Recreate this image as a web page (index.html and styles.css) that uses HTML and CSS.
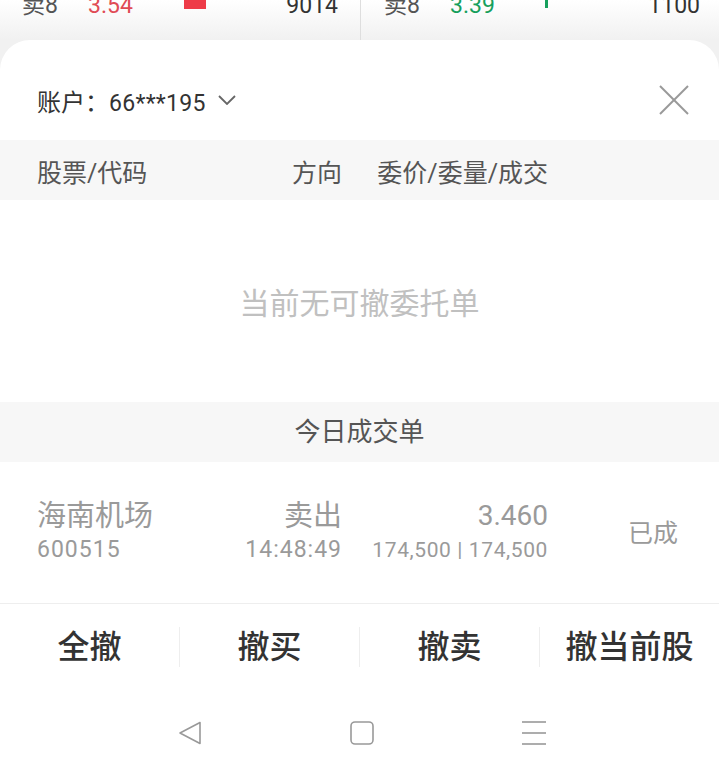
FILE: index.html
```html
<!DOCTYPE html>
<html lang="zh-CN">
<head>
  <meta charset="UTF-8" />
  <title>撤单</title>
  <meta name="viewport" content="width=device-width, initial-scale=1.0" />
  <link rel="stylesheet" href="styles.css">
</head>
<body>
  <div class="quote-row">
    <div class="quote-half left">
      <span class="q-label">卖8</span>
      <span class="q-price up">3.54</span>
      <span class="q-bar red"></span>
      <span class="q-vol">9014</span>
    </div>
    <div class="quote-half right">
      <span class="q-label">卖8</span>
      <span class="q-price down">3.39</span>
      <span class="q-bar green"></span>
      <span class="q-vol">1100</span>
    </div>
  </div>

  <div class="sheet">
    <div class="account-row">
      <span class="account">账户：<span class="num">66***195</span></span>
      <svg class="chevron" width="18" height="10" viewBox="0 0 18 10">
        <polyline points="1,1 9,9 17,1" fill="none" stroke="#666" stroke-width="1.8" />
      </svg>
      <svg class="close" width="30" height="30" viewBox="0 0 30 30">
        <line x1="1" y1="1" x2="29" y2="29" stroke="#999" stroke-width="2" />
        <line x1="29" y1="1" x2="1" y2="29" stroke="#999" stroke-width="2" />
      </svg>
    </div>

    <div class="table-head cols">
      <div>股票/代码</div>
      <div class="r">方向</div>
      <div class="r">委价/委量/成交</div>
      <div></div>
    </div>

    <div class="empty">当前无可撤委托单</div>

    <div class="section-title">今日成交单</div>

    <div class="trade cols">
      <div class="cell">
        <div class="big">海南机场</div>
        <div class="small num">600515</div>
      </div>
      <div class="cell r">
        <div class="big">卖出</div>
        <div class="small num">14:48:49</div>
      </div>
      <div class="cell r">
        <div class="big num price">3.460</div>
        <div class="small num qty">174,500 | 174,500</div>
      </div>
      <div class="status">已成</div>
    </div>

    <div class="actions">
      <button class="act">全撤</button>
      <button class="act">撤买</button>
      <button class="act">撤卖</button>
      <button class="act">撤当前股</button>
    </div>

    <div class="navbar">
      <svg width="24" height="24" viewBox="0 0 24 24">
        <polygon points="22,1.5 2,12 22,22.5" fill="none" stroke="#999" stroke-width="1.6" stroke-linejoin="round" />
      </svg>
      <svg width="24" height="24" viewBox="0 0 24 24">
        <rect x="1" y="1" width="22" height="22" rx="4" fill="none" stroke="#999" stroke-width="1.6" />
      </svg>
      <svg width="24" height="24" viewBox="0 0 24 24">
        <line x1="0" y1="1" x2="24" y2="1" stroke="#999" stroke-width="1.6" />
        <line x1="0" y1="12" x2="24" y2="12" stroke="#999" stroke-width="1.6" />
        <line x1="0" y1="23" x2="24" y2="23" stroke="#999" stroke-width="1.6" />
      </svg>
    </div>
  </div>
</body>
</html>
```

FILE: styles.css
```css
body {
  margin: 0;
  font-family: Roboto, "Noto Sans CJK SC", sans-serif;
  background: linear-gradient(#ffffff, #f1f1f1 40px);
  width: 719px;
  height: 777px;
  overflow: hidden;
}

/* market depth strip behind the sheet */
.quote-row {
  display: flex;
  height: 40px;
  overflow: hidden;
}

.quote-half {
  flex: 1;
  display: flex;
  align-items: flex-start;
  font-size: 23px;
  line-height: 24px;
}

.quote-half.left {
  padding: 0 22px 0 22px;
  border-right: 1px solid #dedede;
}

.quote-half.right {
  padding: 0 19px 0 23px;
}

.quote-half span {
  margin-top: -6px;
}

.q-label {
  color: #555;
  width: 66px;
}

.q-price {
  width: 96px;
}

.right .q-price {
  width: 95px;
}

.up {
  color: #e04b55;
}

.down {
  color: #17a05d;
}

.quote-half .q-bar {
  margin-top: 0;
  height: 9px;
}

.q-bar.red {
  width: 22px;
  background-color: #ee3b48;
}

.q-bar.green {
  width: 3px;
  height: 8px;
  background-color: #17a05d;
}

.q-vol {
  flex: 1;
  text-align: right;
  color: #333;
}

/* bottom sheet */
.sheet {
  background-color: #fff;
  border-radius: 30px 30px 0 0;
  height: 737px;
  display: flex;
  flex-direction: column;
}

.account-row {
  height: 100px;
  box-sizing: border-box;
  padding: 20px 30px 0 37px;
  display: flex;
  align-items: center;
  color: #333;
  font-size: 24px;
}

.account .num {
  font-size: 23px;
  letter-spacing: 0.3px;
}

.chevron {
  margin-left: 12px;
}

.close {
  margin-left: auto;
}

.cols {
  display: grid;
  grid-template-columns: 185px 120px 206px 1fr;
  padding-left: 37px;
}

.r {
  text-align: right;
}

.table-head {
  height: 60px;
  box-sizing: border-box;
  padding-top: 2px;
  align-items: center;
  background-color: #f7f7f7;
  color: #555;
  font-size: 25px;
}

.empty {
  height: 202px;
  display: flex;
  align-items: center;
  justify-content: center;
  color: #c0c0c0;
  font-size: 30px;
}

.section-title {
  height: 60px;
  line-height: 60px;
  text-align: center;
  background-color: #f7f7f7;
  color: #555;
  font-size: 26px;
}

.trade {
  height: 142px;
  box-sizing: border-box;
  border-bottom: 1px solid #eeeeee;
  color: #9a9a9a;
}

.cell {
  padding-top: 36px;
}

.big {
  font-size: 29px;
  line-height: 36px;
}

.big.price {
  font-size: 28px;
}

.small {
  font-size: 23px;
  line-height: 32px;
  letter-spacing: 1px;
}

.small.qty {
  font-size: 21px;
  letter-spacing: 0.6px;
}

.status {
  align-self: center;
  padding-left: 80px;
  padding-bottom: 4px;
  font-size: 25px;
}

.actions {
  height: 85px;
  display: flex;
  align-items: center;
}

.act {
  flex: 1;
  height: 40px;
  padding: 0;
  border: none;
  border-right: 1px solid #eeeeee;
  background: none;
  font-family: inherit;
  font-size: 32px;
  font-weight: 500;
  color: #333;
  line-height: 40px;
}

.act:last-child {
  border-right: none;
}

.navbar {
  flex: 1;
  display: flex;
  align-items: center;
  padding-left: 178px;
  gap: 148px;
}
```
